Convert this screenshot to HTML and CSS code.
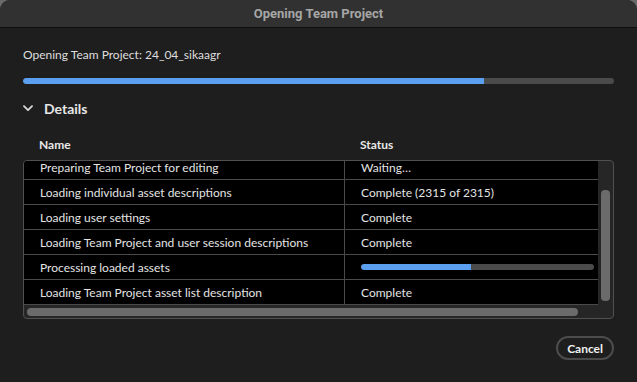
FILE: index.html
```html
<!DOCTYPE html>
<html lang="en">
<head>
	<meta charset="UTF-8">
	<title>Opening Team Project</title>
	<link rel="stylesheet" href="styles.css">
</head>
<body>
	<div class="dialog">
		<div class="titlebar">Opening Team Project</div>
		<div class="content">
			<div class="message">Opening Team Project: 24_04_sikaagr</div>
			<div class="progress"><div class="progress-fill" style="width: 78%"></div></div>

			<div class="details-head">
				<svg class="chevron" width="10" height="7" viewBox="0 0 10 7"><path d="M1 1.2 L5 5.2 L9 1.2" fill="none" stroke="#d8d8d8" stroke-width="1.8" stroke-linecap="round" stroke-linejoin="round"/></svg>
				<span>Details</span>
			</div>

			<div class="cols">
				<div class="col-name">Name</div>
				<div class="col-status">Status</div>
			</div>

			<div class="table-frame">
				<div class="viewport">
					<div class="rows">
						<div class="row"><div class="cell name">Preparing Team Project for editing</div><div class="cell status">Waiting…</div></div>
						<div class="row"><div class="cell name">Loading individual asset descriptions</div><div class="cell status">Complete (2315 of 2315)</div></div>
						<div class="row"><div class="cell name">Loading user settings</div><div class="cell status">Complete</div></div>
						<div class="row"><div class="cell name">Loading Team Project and user session descriptions</div><div class="cell status">Complete</div></div>
						<div class="row"><div class="cell name">Processing loaded assets</div><div class="cell status"><div class="mini-progress"><div class="progress-fill" style="width: 47%"></div></div></div></div>
						<div class="row"><div class="cell name">Loading Team Project asset list description</div><div class="cell status">Complete</div></div>
					</div>
				</div>
				<div class="vscroll"><div class="vthumb"></div></div>
				<div class="hscroll"><div class="hthumb"></div></div>
				<div class="corner"></div>
			</div>

			<div class="actions">
				<button class="btn">Cancel</button>
			</div>
		</div>
	</div>
</body>
</html>
```

FILE: styles.css
```css
* {
	box-sizing: border-box;
}
html, body {
	margin: 0;
	height: 100%;
	background: #6a6a6a;
}
body {
	font-family: "Lato", "Open Sans", sans-serif;
	font-size: 12px;
	color: #e4e4e4;
}
.dialog {
	height: 382px;
	background: #1e1e1e;
	border-radius: 10px 10px 0 0;
	overflow: hidden;
	display: flex;
	flex-direction: column;
}
.titlebar {
	height: 28px;
	line-height: 27px;
	background: #313131;
	border-bottom: 1px solid #0f0f0f;
	text-align: center;
	font-family: "Roboto", sans-serif;
	font-weight: 700;
	font-size: 13px;
	color: #a6a6a6;
}
.content {
	padding: 18px 23px 0 23px;
	display: flex;
	flex-direction: column;
}
.message {
	height: 18px;
	line-height: 18px;
	color: #dedede;
}
.progress {
	margin-top: 14px;
	height: 6px;
	border-radius: 3px;
	background: #4b4b4b;
	overflow: hidden;
}
.progress-fill {
	height: 100%;
	background: #5a9ff0;
	border-radius: 3px 0 0 3px;
}
.details-head {
	margin-top: 14px;
	height: 20px;
	display: flex;
	align-items: center;
	gap: 11px;
	font-weight: 700;
	font-size: 14px;
	color: #e6e6e6;
}
.cols {
	margin-top: 19px;
	height: 15px;
	display: flex;
	font-weight: 700;
	font-size: 12px;
	color: #e8e8e8;
}
.col-name {
	width: 321px;
	padding-left: 16px;
}
.col-status {
	padding-left: 16px;
}
.table-frame {
	margin-top: 8px;
	height: 159px;
	border: 1px solid #505050;
	border-radius: 4px;
	overflow: hidden;
	display: grid;
	grid-template-columns: 1fr 15px;
	grid-template-rows: 1fr 13px;
	background: #262626;
}
.viewport {
	background: #000;
	overflow: hidden;
}
.rows {
	margin-top: -6px;
}
.row {
	display: flex;
	height: 25px;
	border-bottom: 1px solid #4a4a4a;
}
.cell {
	display: flex;
	align-items: center;
	padding-left: 16px;
	white-space: nowrap;
}
.cell.name {
	width: 321px;
	border-right: 1px solid #4a4a4a;
}
.cell.status {
	flex: 1;
	padding-right: 4px;
}
.mini-progress {
	width: 100%;
	height: 6px;
	border-radius: 3px;
	background: #4b4b4b;
	overflow: hidden;
}
.vscroll {
	padding: 29px 3px 0 3px;
}
.vthumb {
	height: 111px;
	border-radius: 4px;
	background: #6b6b6b;
}
.hscroll {
	padding: 3px 20px 0 3px;
}
.hthumb {
	height: 8px;
	border-radius: 4px;
	background: #6b6b6b;
}
.actions {
	margin-top: 17px;
	display: flex;
	justify-content: flex-end;
}
.btn {
	height: 24px;
	padding: 0 9px;
	border: 2px solid #4c4c4c;
	border-radius: 12px;
	background: transparent;
	font-family: "Lato", sans-serif;
	font-weight: 700;
	font-size: 12px;
	color: #f0f0f0;
}
```
